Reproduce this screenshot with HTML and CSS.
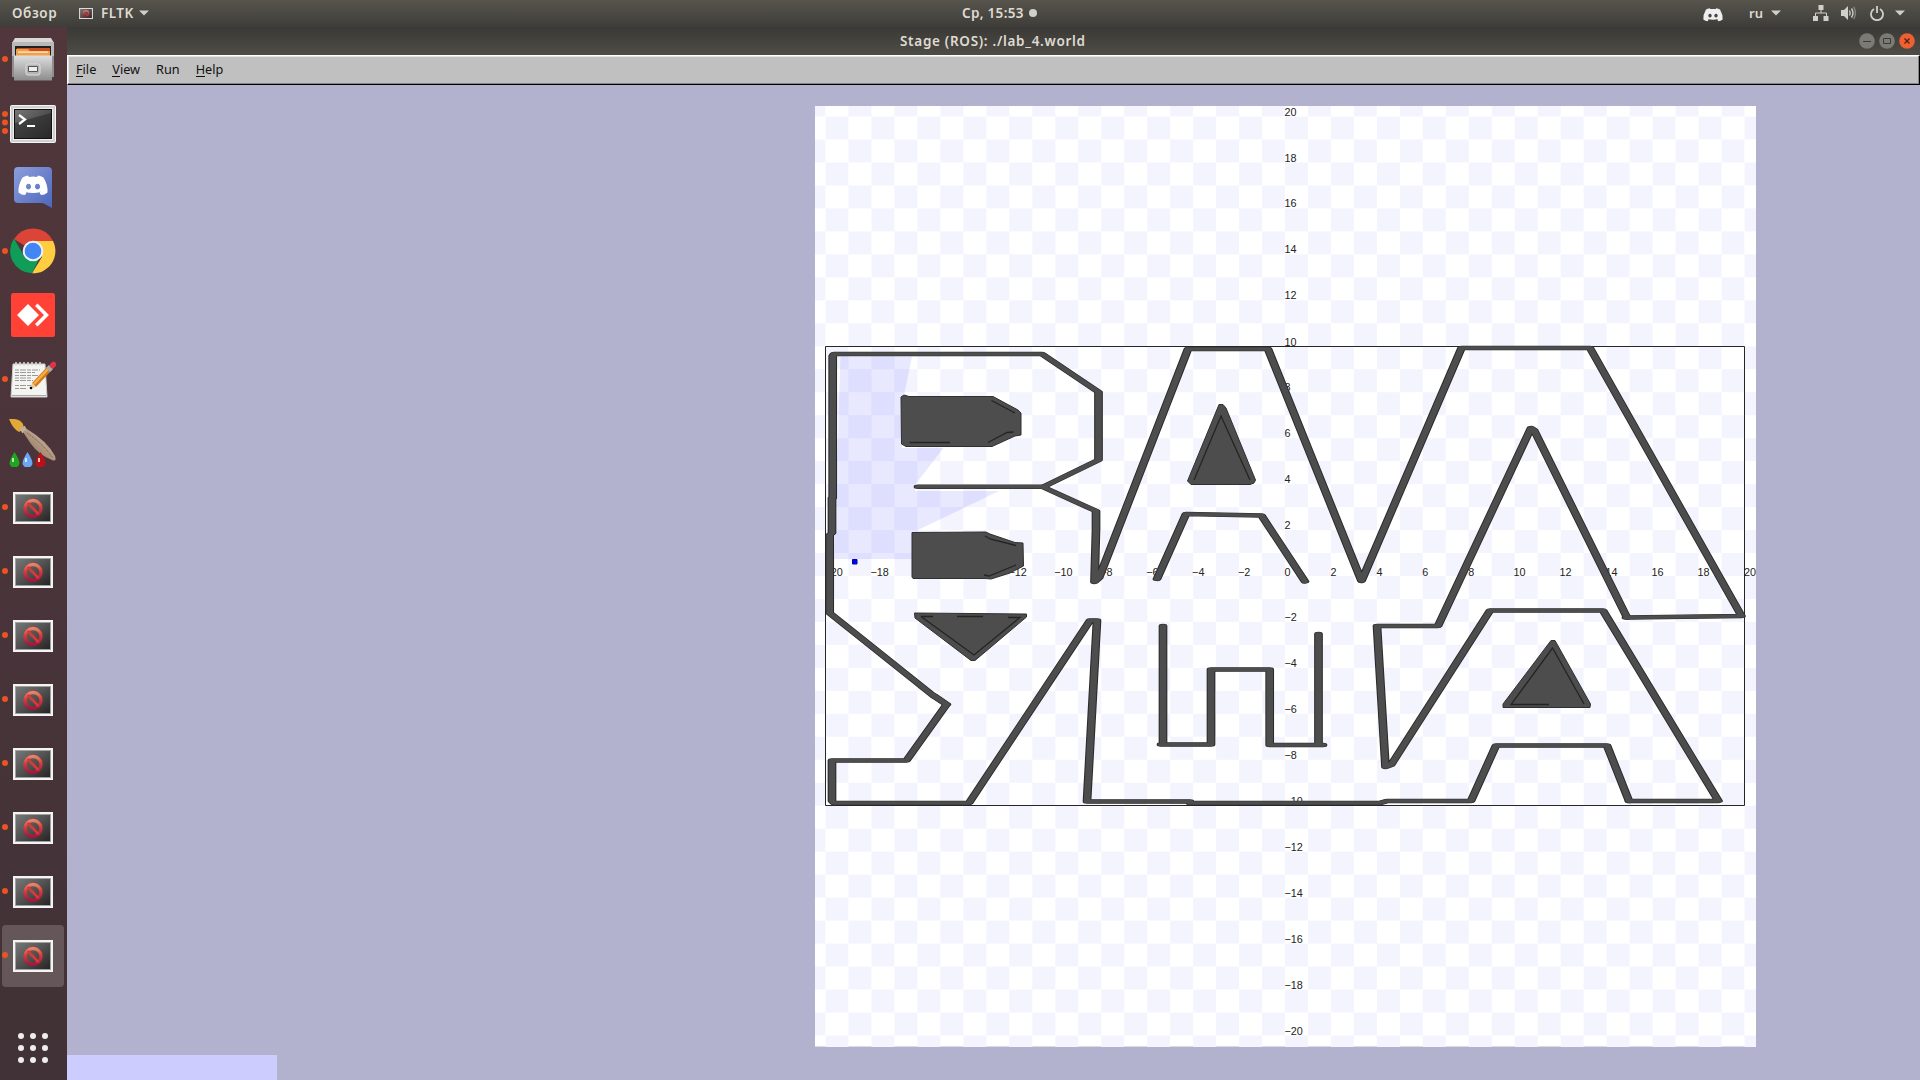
FILE: index.html
```html
<!DOCTYPE html>
<html lang="ru">
<head>
<meta charset="utf-8">
<title>Stage (ROS): ./lab_4.world</title>
<link rel="stylesheet" href="styles.css">
</head>
<body>
<svg class="defs" aria-hidden="true">
  <defs>
    <linearGradient id="dark" x1="0" y1="0" x2="1" y2="1"><stop offset="0" stop-color="#777"/><stop offset=".5" stop-color="#505050"/><stop offset="1" stop-color="#252525"/></linearGradient>
    <linearGradient id="red" x1="0" y1="0" x2="0" y2="1"><stop offset="0" stop-color="#f08060"/><stop offset=".4" stop-color="#dc3e3a"/><stop offset="1" stop-color="#a8143c"/></linearGradient>
    <linearGradient id="steel" x1="0" y1="0" x2="0" y2="1"><stop offset="0" stop-color="#dedede"/><stop offset="1" stop-color="#8c8c8c"/></linearGradient>
    <linearGradient id="blurple" x1="0" y1="0" x2="1" y2="1"><stop offset="0" stop-color="#8c9edb"/><stop offset="1" stop-color="#4c66bd"/></linearGradient>
    <linearGradient id="wood" x1="0" y1="1" x2="1" y2="0"><stop offset="0" stop-color="#7d5f4a"/><stop offset="1" stop-color="#e2cdb5"/></linearGradient>
    <symbol id="blocked" viewBox="0 0 40 32">
      <path fill="#f4f4f4" d="M0 0h40v32H0z"/><path fill="#a0a0a0" d="M2 2h36v28H2z"/><path fill="url(#dark)" d="M3 3h34v26H3z"/>
      <circle cx="20" cy="16.5" r="8" fill="none" stroke="url(#red)" stroke-width="3.4"/><path d="M14.5 11l11 11" stroke="#d23b3b" stroke-width="3"/>
    </symbol>
    <symbol id="ghost" viewBox="0 0 30 22">
      <path fill-rule="evenodd" d="M10 1.5l1 1.4q4-.6 8 0l1-1.4q3 .3 5.500 2Q30 11 29.500 18.500 26.500 21 23 21l-1.700-2.400 2.200-1.200Q15 20.500 6.500 17.400l2.200 1.200L7 21q-3.500 0-6.500-2.500Q0 11 4.500 3.500 7 1.800 10 1.500zM10.500 9.800a2.600 2.800 0 1 0 .01 0zM19.500 9.800a2.600 2.800 0 1 0 .01 0z"/>
    </symbol>
    <symbol id="caret" viewBox="0 0 10 6"><path fill="#d0cfcb" d="M0 .5h10L5 5.500z"/></symbol>
  </defs>
</svg>
<header class="topbar">
  <div class="left"><span class="overview">Обзор</span><svg class="app-icon"><use href="#blocked"/></svg><span class="app-name">FLTK</span><svg class="caret"><use href="#caret"/></svg></div>
  <div class="clock"><span>Ср, 15:53</span><i></i></div>
  <div class="tray">
    <svg class="tray-ghost" fill="#eee"><use href="#ghost"/></svg>
    <span class="lang">ru</span><svg class="caret"><use href="#caret"/></svg>
    <svg class="net" viewBox="0 0 16 16"><path fill="#d0cfcb" d="M5.500 0h5v5h-5zM0 11h5v5H0zM10.500 11h5v5h-5z"/><path fill="none" stroke="#d0cfcb" d="M8 5v3M2.500 11V8h11v3"/></svg>
    <svg class="vol" viewBox="0 0 16 14"><path fill="#d0cfcb" d="M0 4h3l4-4v14l-4-4H0z"/><path fill="none" stroke="#d0cfcb" stroke-width="1.400" d="M8.500 4.500q1.500 2.500 0 5M10.500 2.500q3 4.500 0 9"/><path fill="none" stroke="#85837c" stroke-width="1.400" d="M12.700.8q3.500 6.200 0 12.400"/></svg>
    <svg class="power" viewBox="0 0 14 15"><path fill="none" stroke="#d0cfcb" stroke-width="1.800" d="M4 3a6 6 0 1 0 6 0M7 0v7"/></svg>
    <svg class="caret"><use href="#caret"/></svg>
  </div>
</header>
<div class="desktop">
  <nav class="dock">
    <div class="item one lift"><svg width="42" height="44" viewBox="0 0 42 44"><path fill="#8f8f8f" d="M0 6h42v34H0z"/><path fill="#d8d8d8" d="M3 1h36l3 5H0z"/><path fill="#b9b9b9" d="M0 5h42v14H0z"/><path fill="#202020" d="M3 9h36v11H3z"/><path fill="#c8501e" d="M5 11h33v5H5z"/><path fill="#efa04a" d="M4 12h12l2 2h20v5H4z"/><path fill="#fff0d5" d="M6 14.500h30v1.200H6z"/><path fill="url(#steel)" d="M2 18.500h38V43.500H2z"/><rect x="14" y="27" width="14" height="11" rx="2" fill="#b5b5b5" stroke="#ddd"/><path fill="#eee" stroke="#555" d="M16.500 29.500h9v5h-9z"/></svg></div>
    <div class="item three"><svg width="46" height="38" viewBox="0 0 46 38"><rect x=".5" y=".5" width="45" height="37" rx="1" fill="#d0d0d0" stroke="#f4f4f4"/><path fill="#eee" d="M3 3h40v32H3z"/><path fill="#111" d="M4 4h38v30H4z"/><path fill="url(#dark)" d="M5 5h36v28H5z"/><path fill="#2c2c2c" opacity=".6" d="M5 18L41 8v25H5z"/><path fill="none" stroke="#fff" stroke-width="2.200" d="M9 10l6 4.500L9 19M17 21h8"/></svg></div>
    <div class="item"><svg width="38" height="42" viewBox="0 0 38 42"><path fill="url(#blurple)" d="M4 0h30q4 0 4 4v37l-9-5H4q-4 0-4-4V4q0-4 4-4z"/><use href="#ghost" x="4" y="7" width="30" height="22" fill="#fff"/></svg></div>
    <div class="item one lift"><svg width="46" height="46" viewBox="0 0 46 46"><path fill="#db4437" d="M23 23L4 11A22.300 22.300 0 0 1 43 13z"/><path fill="#ffcd40" d="M23 13h20A22.300 22.300 0 0 1 22 45.300L32 29z"/><path fill="#0f9d58" d="M4 10.500L14 28l8 4 8-3-8 16.300A22.300 22.300 0 0 1 4 10.500z"/><circle cx="23" cy="23" r="9.300" fill="#4285f4" stroke="#f1f1f1" stroke-width="2"/></svg></div>
    <div class="item lift"><svg width="44" height="44" viewBox="0 0 44 44"><rect width="44" height="44" rx="2.500" fill="#ff4136"/><path fill="#fff" d="M6 22l11-11 11 11-11 11zM24 13l2.500-2.500L38 22 26.500 33.500 24 31l9-9z"/></svg></div>
    <div class="item one lift"><svg width="46" height="38" viewBox="0 0 46 38"><path fill="#f4f4f1" stroke="#ccc" d="M3 4h32l2 33H1z"/><path stroke="#aaa" d="M2 35.500h34"/><path fill="none" stroke="#ddd" stroke-width="1.500" d="M6 6V2M10 6V2M14 6V2M18 6V2M22 6V2M26 6V2M30 6V2"/><path stroke="#999" stroke-dasharray="4 1 6 1" d="M5 10h25M5 12.500h20M5 15.500h24M5 18h17M5 20.500h18M5 25.500h16M5 28.500h12"/><path stroke="#d27a1e" stroke-width="5.500" d="M24 25L39 9"/><path stroke="#f6ae48" stroke-width="2.500" d="M24 24L38 9"/><path fill="#edc99a" d="M20 29l2-6 4 4z"/><circle cx="21" cy="28" r="1.300"/><path stroke="#aaa" stroke-width="6" d="M38 10l3-3"/><path stroke="#dc3545" stroke-width="5.500" stroke-linecap="round" d="M42.500 5.500l1-1"/></svg></div>
    <div class="item lift"><svg width="48" height="48" viewBox="0 0 48 48"><path fill="#e3a938" d="M0 0q10-1 14 5l1 5-5 3Q4 10 0 0z"/><path stroke="#bdb2a0" stroke-width="5" d="M12 12l5-3"/><path fill="url(#wood)" d="M14 13l4-3q20 12 28 27 2 6-3 4-13-5-21-16z"/><path fill="none" stroke="#6d5444" stroke-dasharray="1 1" d="M18 14q15 10 26 25"/><path fill="#20a51e" d="M5.500 33q5 8 5 11a5 4.500 0 0 1-10 0q0-3 5-11z"/><path fill="#6ca7f5" d="M18.500 33q5 8 5 11a5 4.500 0 0 1-10 0q0-3 5-11z"/><path fill="#ba1116" d="M31.500 33q5 8 5 11a5 4.500 0 0 1-10 0q0-3 5-11z"/><path stroke="#fff" opacity=".7" stroke-width="2" d="M4 39v4M17 39v4M30 39v4"/></svg></div>
    <div class="item one"><svg width="40" height="32"><use href="#blocked"/></svg></div>
    <div class="item one"><svg width="40" height="32"><use href="#blocked"/></svg></div>
    <div class="item one"><svg width="40" height="32"><use href="#blocked"/></svg></div>
    <div class="item one"><svg width="40" height="32"><use href="#blocked"/></svg></div>
    <div class="item one"><svg width="40" height="32"><use href="#blocked"/></svg></div>
    <div class="item one"><svg width="40" height="32"><use href="#blocked"/></svg></div>
    <div class="item one"><svg width="40" height="32"><use href="#blocked"/></svg></div>
    <div class="item one active"><svg width="40" height="32"><use href="#blocked"/></svg></div>
    <div class="apps"><i></i><i></i><i></i><i></i><i></i><i></i><i></i><i></i><i></i></div>
  </nav>
  <main class="window">
    <div class="titlebar"><span class="title">Stage (ROS): ./lab_4.world</span>
      <div class="controls">
        <svg viewBox="0 0 16 16"><circle cx="8" cy="8" r="7.800" fill="#7b7a74"/><path stroke="#3c3b37" d="M4 8.500h8"/></svg>
        <svg viewBox="0 0 16 16"><circle cx="8" cy="8" r="7.800" fill="#7b7a74"/><path fill="none" stroke="#3c3b37" d="M4.500 5.500h7v5h-7z"/></svg>
        <svg viewBox="0 0 16 16"><circle cx="8" cy="8" r="7.800" fill="#ee5f32"/><path stroke="#4b2418" stroke-width="1.300" d="M5.500 5.500l5 5M10.500 5.500l-5 5"/></svg>
      </div>
    </div>
    <div class="menubar"><span><u>F</u>ile</span><span><u>V</u>iew</span><span>Run</span><span><u>H</u>elp</span></div>
    <div class="canvas">
      <svg class="world" viewBox="67 85 1853 995" width="1853" height="995">
        <defs>
          <pattern id="check" x="1285" y="576" width="45.950" height="45.950" patternUnits="userSpaceOnUse"><path fill="#f4f4ff" d="M0 0h22.975v22.975H0zM22.975 22.975h22.975v22.975h-22.975z"/></pattern>
          <!-- wall centrelines; y is doubled because the pen is twice as wide as it is tall -->
          <g id="walls">
            <path d="M832.700 996V712L834 708H1042L1098.500 784V920L1043 974L1096 1022V1060L1094.500 1164L1099 1156L1188 698H1268L1361.500 1162L1461.500 696H1590L1741.500 1232L1627 1235L1534 860 1531 856 1438 1252H1377L1385.500 1534L1391 1530L1490 1221H1603L1718.500 1602H1629L1607 1491H1496L1471 1602H1387L1380 1606H1190V1603H1087L1097 1241H1090L969 1606H834L832 1602V1521H906.500L946.500 1409L935 1394L829.700 1226V1070L832 1066V996"/>
            <path d="M918 973.500H1043M934 1391L947 1409M1627 1235H1626M1629 1602H1630"/>
            <path d="M1157 1158L1186 1028L1261.500 1031L1305 1163"/>
            <path d="M1163 1252V1488M1161 1489H1211V1339H1269.700V1490H1323M1318.500 1268V1490"/>
          </g>
          <path id="solids" d="M901 397L904 395L909 396.500H993L1018 410 1021 413V435L1015 436 992 446.500H906L901.500 444zM912 532.500L986 532 990 534 1015 542.500 1023 543 1023.500 566 1010 573 991 579 985 578.500H913L912 577zM914.500 613L1026.500 614V617L975 660.500H971L915 618zM1219 404.500H1223L1226 408 1255.500 480 1254 483 1250 484.500H1191L1187.500 481zM1551 640.500H1555L1590.500 704 1590 707.500H1503V704z"/>
        </defs>
        <path fill="#fff" d="M815 106h941v940.500H815z"/>
        <path fill="url(#check)" shape-rendering="crispEdges" d="M815 106h941v940.500H815z"/>
        <path fill="#0000ff" fill-opacity=".09" d="M840.500 356.500H912L902 405V448H943.500L915 485V491H999L918 530 912 559H834L837 463z"/>
        <g class="labels">
          <text x="1284.500" y="115.500">20</text><text x="1284.500" y="161.500">18</text><text x="1284.500" y="207.400">16</text><text x="1284.500" y="253.400">14</text><text x="1284.500" y="299.300">12</text><text x="1284.500" y="345.500">10</text><text x="1284.500" y="391.400">8</text><text x="1284.500" y="437.400">6</text><text x="1284.500" y="483.300">4</text><text x="1284.500" y="529.300">2</text>
          <text x="1284.500" y="621.200">−2</text><text x="1284.500" y="667.100">−4</text><text x="1284.500" y="713">−6</text><text x="1284.500" y="759">−8</text><text x="1284.500" y="804.500">−10</text><text x="1284.500" y="850.700">−12</text><text x="1284.500" y="896.600">−14</text><text x="1284.500" y="942.600">−16</text><text x="1284.500" y="988.500">−18</text><text x="1284.500" y="1034.500">−20</text>
          <text x="824.500" y="575.500">−20</text><text x="870.500" y="575.500">−18</text><text x="1008.500" y="575.500">−12</text><text x="1054.300" y="575.500">−10</text><text x="1100.200" y="575.500">−8</text><text x="1146.200" y="575.500">−6</text><text x="1192.100" y="575.500">−4</text><text x="1238" y="575.500">−2</text><text x="1284.500" y="575.500">0</text><text x="1330.500" y="575.500">2</text><text x="1376.400" y="575.500">4</text><text x="1422.300" y="575.500">6</text><text x="1468.300" y="575.500">8</text><text x="1513.500" y="575.500">10</text><text x="1559.500" y="575.500">12</text><text x="1605.500" y="575.500">14</text><text x="1651.500" y="575.500">16</text><text x="1697.500" y="575.500">18</text><text x="1744" y="575.500">20</text>
        </g>
        <path fill="none" stroke="#262626" d="M825.500 346.500H1744.500V805.500H825.500z"/>
        <g transform="scale(1 .5)" fill="none" stroke-linejoin="round" stroke-linecap="round">
          <use href="#walls" stroke="#2b2b2b" stroke-width="8.700"/><use href="#walls" stroke="#4d4d4d" stroke-width="6.600"/>
        </g>
        <use href="#solids" fill="#4d4d4d" stroke="#303030"/>
        <path fill="none" stroke="#242424" stroke-width="1.300" d="M909.500 442.500H950M991.500 400.500L1015 413M988 442.500L1007 432.500 1013.500 432M985 536L990 539 1016 545.500M984 575L989 576 1016 565M921 616.500H933M957 616.500H983M1008 617.500H1020L974 655 921 616.500M1194 480L1221 416 1250 480M1549 704.500H1511L1552.500 648 1584 704"/>
        <path fill="#0000ff" stroke="#0000b0" d="M852.500 559.500h4.500v4.500h-4.500z"/>
      </svg>
      <div class="status"></div>
    </div>
  </main>
</div>
</body>
</html>
```
FILE: styles.css
```css
* { box-sizing: border-box; }
body { margin: 0; width: 1920px; height: 1080px; overflow: hidden; display: flex; flex-direction: column; font-family: "Noto Sans", sans-serif; background: #b2b2ce; }
svg { display: block; flex: none; }
.defs { position: absolute; width: 0; height: 0; }
.topbar { height: 27px; flex: none; display: grid; grid-template-columns: 962px auto 1fr; align-items: center; background: linear-gradient(#57544c, #3e3d39); color: #dfdbd2; font-size: 13px; font-weight: 600; line-height: 25px; padding-bottom: 1px; }
.left { display: flex; align-items: center; padding-left: 12px; }
.overview { width: 67px; font-size: 13.500px; letter-spacing: .6px; }
.app-icon { width: 14px; height: 11px; }
.app-name { margin: 0 5px 0 8px; width: 33px; font-size: 13.500px; letter-spacing: .5px; }
.caret { width: 10px; height: 6px; }
.clock { display: flex; align-items: center; gap: 4px; font-size: 13.500px; }
.clock span { width: 63px; white-space: nowrap; letter-spacing: .3px; }
.clock i { width: 8px; height: 8px; border-radius: 50%; background: #d0cfcb; }
.tray { display: flex; align-items: center; justify-content: flex-end; padding-right: 15px; }
.tray-ghost { width: 20px; height: 15px; margin-top: 2px; }
.lang { width: 14px; margin: 0 8px 0 26px; }
.net { width: 16px; height: 16px; margin-left: 32px; }
.vol { width: 16px; height: 14px; margin-left: 12px; }
.power { width: 14px; height: 15px; margin: 0 11px 0 13px; }
.desktop { flex: 1; display: flex; min-height: 0; }
.dock { width: 67px; flex: none; display: flex; flex-direction: column; padding: 1px 3px 0 2px; background: linear-gradient(#51373b, #49343a 50%, #403236); }
.item { height: 64px; flex: none; display: flex; align-items: center; justify-content: center; border: 1px solid transparent; border-width: 1px 0; background-clip: padding-box; border-radius: 4px; position: relative; }
.lift { padding-bottom: 3px; }
.active { background-color: #65565a; }
.one::before, .three::before { content: ""; position: absolute; left: 0; top: 27px; width: 6px; height: 6px; border-radius: 50%; background: #e95420; }
.three::before { top: 18px; box-shadow: 0 8.500px #e95420, 0 17px #e95420; }
.apps { margin: 45px 0 0 16px; display: grid; grid-template-columns: repeat(3, 6px); gap: 6px; }
.apps i { height: 6px; border-radius: 50%; background: #eee; }
.window { flex: 1; display: flex; flex-direction: column; min-width: 0; }
.titlebar { height: 28px; flex: none; display: flex; align-items: center; background: linear-gradient(#3a3935, #4e4c46); color: #dfdbd2; }
.title { margin-left: 833px; width: 186px; font-size: 13.500px; font-weight: 600; letter-spacing: .7px; line-height: 28px; white-space: nowrap; }
.controls { margin-left: auto; padding-right: 5px; display: flex; gap: 4px; }
.controls svg { width: 16px; height: 16px; }
.menubar { height: 30px; flex: none; display: flex; align-items: center; gap: 16px; padding: 0 0 2px 8px; background: #c0c0c0; border: 1px solid #000; border-top-color: #fff; border-left-color: #fff; box-shadow: inset 0 -1px #858585, inset -1px 0 #858585, inset 1px 1px #e4e4e4; color: #111; font-size: 12.700px; }
.menubar u { text-decoration: none; box-shadow: inset 0 -1px #111; display: inline-block; line-height: 16px; }
.canvas { flex: 1; display: flex; position: relative; background: #b2b2ce; }
.labels { font-family: "Liberation Sans", sans-serif; font-size: 10.800px; fill: #222; }
.status { position: absolute; left: 0; bottom: 0; width: 210px; height: 25px; background: #ccccff; }
```
